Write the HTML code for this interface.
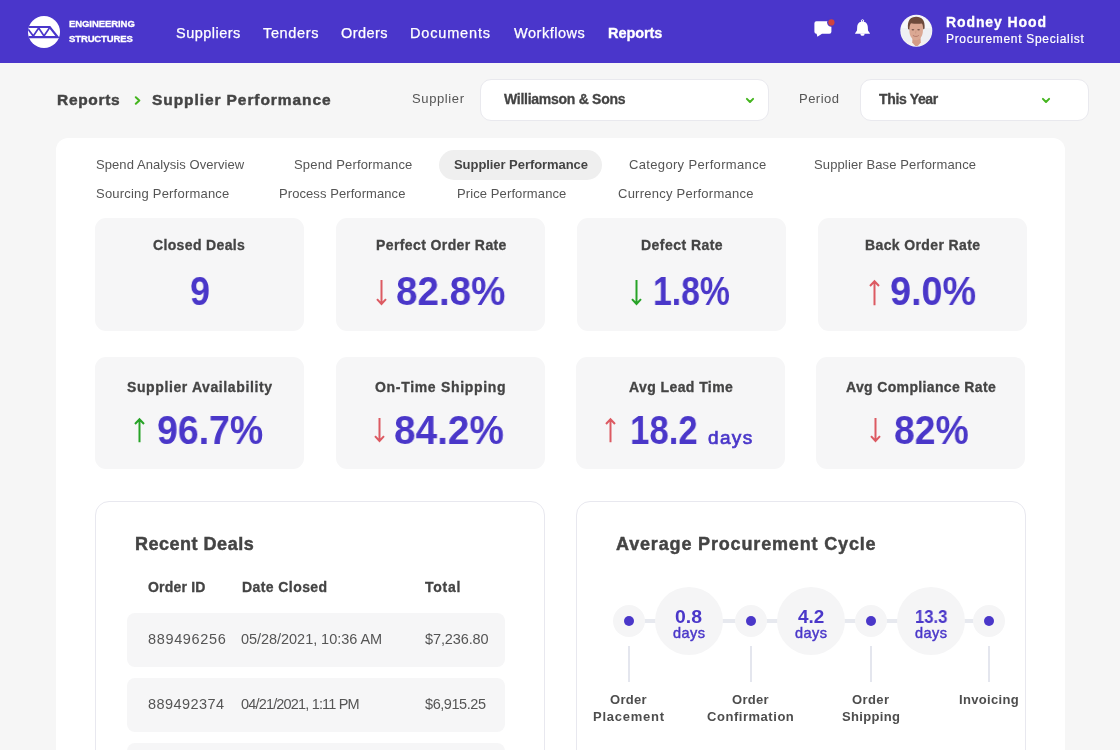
<!DOCTYPE html>
<html><head><meta charset="utf-8"><title>Supplier Performance</title><style>
*{margin:0;padding:0;box-sizing:border-box}
html,body{width:1120px;height:750px;overflow:hidden;background:#f6f6f6;font-family:"Liberation Sans",sans-serif}
.t{position:absolute;white-space:nowrap;-webkit-font-smoothing:antialiased;will-change:transform}
.hdr{position:absolute;left:0;top:0;width:1120px;height:63px;background:#4a36cb}
.sel{position:absolute;top:79px;height:42px;background:#fff;border:1px solid #e9e9ee;border-radius:11px}
.panel{position:absolute;left:56px;top:138px;width:1009px;height:700px;background:#fff;border-radius:12px}
.pill{position:absolute;left:439px;top:150px;width:163px;height:30px;border-radius:15px;background:#efefef}
.card{position:absolute;width:209px;background:#f6f6f7;border-radius:11px}
.box{position:absolute;top:501px;height:400px;background:#fff;border:1px solid #e8e8ef;border-radius:14px}
.row{position:absolute;left:127px;width:378px;height:54px;background:#f6f6f7;border-radius:8px}
.conn{position:absolute;height:4px;background:#e7e9ef}
.sc{position:absolute;width:32px;height:32px;border-radius:50%;background:#f5f5f6}
.bc{position:absolute;width:68px;height:68px;border-radius:50%;background:#f5f5f6}
.dot{position:absolute;width:10px;height:10px;border-radius:50%;background:#4a37c9}
.vl{position:absolute;top:645.5px;width:2px;height:36.5px;background:#e4e6ee}
.ar{position:absolute;overflow:visible}
.b{-webkit-text-stroke:0.3px currentColor}
.bb{-webkit-text-stroke:0.45px currentColor}
</style></head>
<body>
<div class="hdr"></div>
<svg style="position:absolute;left:28px;top:16px" width="32" height="32" viewBox="0 0 32 32">
<defs><clipPath id="cc"><circle cx="16" cy="16" r="16"/></clipPath></defs>
<circle cx="16" cy="16" r="16" fill="#fff"/>
<g clip-path="url(#cc)" stroke="#4a36cb" fill="none">
<path d="M-1 11 H21.7 L29.8 21.2 H-1" stroke-width="2.2" stroke-linejoin="miter"/>
<path d="M0 13 L5.3 20 L10.7 12 L16 20 L21.4 12" stroke-width="1.7"/>
</g></svg><svg style="position:absolute;left:813px;top:17px" width="24" height="22" viewBox="0 0 24 22">
<path d="M3.4 4.3 H16.4 A2 2 0 0 1 18.4 6.3 V14.7 A2 2 0 0 1 16.4 16.7 H9 L4.4 19.8 L3.6 16.7 H3.4 A2 2 0 0 1 1.4 14.7 V6.3 A2 2 0 0 1 3.4 4.3 Z" fill="#fff"/>
<circle cx="18.4" cy="5.4" r="4.3" fill="#4a36cb"/>
<circle cx="18.4" cy="5.4" r="3.1" fill="#d0433f"/></svg><svg style="position:absolute;left:854px;top:19px" width="17" height="18" viewBox="0 0 17 18">
<circle cx="8.5" cy="1.9" r="1.2" fill="none" stroke="#fff" stroke-width="1"/>
<path d="M8.5 2.6 C11.6 2.6 13.6 4.8 13.8 8 L14 11.6 L15.9 14.2 V14.8 H1.1 V14.2 L3 11.6 L3.2 8 C3.4 4.8 5.4 2.6 8.5 2.6 Z" fill="#fff"/>
<path d="M6.2 14.6 H10.8 L10.2 16.2 Q8.5 17.2 6.8 16.2 Z" fill="#fff"/></svg><svg style="position:absolute;left:900px;top:14px" width="33" height="34" viewBox="0 0 33 34">
<defs><clipPath id="av"><circle cx="16.3" cy="16.8" r="15.2"/></clipPath></defs>
<circle cx="16.3" cy="16.8" r="16" fill="#f4f4f6"/>
<g clip-path="url(#av)">
<rect width="33" height="34" fill="#eeeff2"/>
<rect x="0" y="0" width="33" height="14" fill="#f6f6f8"/>
<path d="M3 34 C4 29 8 27.3 12.5 26.8 L20.5 26.8 C25 27.3 28.5 29 29.5 34 Z" fill="#f4f2ef"/>
<path d="M12.6 23 L20.4 23 L20.8 28.6 L16.6 33.5 L12.2 28.6 Z" fill="#d49c86"/>
<path d="M9.3 11 C9.3 8 11.5 6.5 16.2 6.5 C21 6.5 23.1 8 23.1 11 L22.9 17 C22.7 22.3 19.8 26.2 16.1 26.2 C12.3 26.2 9.5 22.3 9.4 17 Z" fill="#dba893"/>
<path d="M8 15 C7.2 6 10.5 2.8 16.2 2.8 C21.8 2.8 25.2 6 24.6 14.5 L23.2 15.5 C23 11.5 22.6 10 21.6 9.5 C18.5 10.2 13.8 9.8 11 9.2 C10 10.3 9.6 12 9.4 15.8 Z" fill="#6d4a3b"/>
<ellipse cx="12.9" cy="15.8" rx="1.4" ry="0.75" fill="#7d5a4e"/><ellipse cx="18.6" cy="15.8" rx="1.4" ry="0.75" fill="#7d5a4e"/>
<path d="M16 16.5 L15.6 19.5" stroke="#c89480" stroke-width="0.8" fill="none"/>
<path d="M12.9 21.4 C14.6 22.8 17.2 22.8 18.8 21.4" stroke="#b57a6c" stroke-width="1" fill="none"/>
</g></svg>
<div class="sel" style="left:480px;width:289px"></div>
<div class="sel" style="left:860px;width:229px"></div>
<svg style="position:absolute;left:745px;top:97px" width="10" height="7" viewBox="0 0 10 7"><path d="M1.9 1.9 L5 5 L8.1 1.9" fill="none" stroke="#45b51f" stroke-width="2" stroke-linecap="round" stroke-linejoin="round"/></svg><svg style="position:absolute;left:1041px;top:97px" width="10" height="7" viewBox="0 0 10 7"><path d="M1.9 1.9 L5 5 L8.1 1.9" fill="none" stroke="#45b51f" stroke-width="2" stroke-linecap="round" stroke-linejoin="round"/></svg><svg style="position:absolute;left:134px;top:96.3px" width="8" height="9" viewBox="0 0 8 9"><path d="M1.8 1.2 L5.3 4.5 L1.8 7.8" fill="none" stroke="#45b51f" stroke-width="2" stroke-linecap="round" stroke-linejoin="round"/></svg>
<div class="panel"></div>
<div class="pill"></div>
<div class="card" style="left:95px;top:218px;height:113px"></div><div class="card" style="left:336px;top:218px;height:113px"></div><div class="card" style="left:577px;top:218px;height:113px"></div><div class="card" style="left:818px;top:218px;height:113px"></div><div class="card" style="left:95px;top:357px;height:112px"></div><div class="card" style="left:336px;top:357px;height:112px"></div><div class="card" style="left:576px;top:357px;height:112px"></div><div class="card" style="left:816px;top:357px;height:112px"></div>
<div class="box" style="left:95px;width:450px"></div>
<div class="box" style="left:576px;width:450px"></div>
<div class="row" style="top:613px"></div><div class="row" style="top:678px"></div><div class="row" style="top:743px"></div>
<div class="conn" style="left:628.6px;top:619px;width:360.6px"></div><div class="sc" style="left:612.6px;top:605px"></div><div class="dot" style="left:623.6px;top:616.3px"></div><div class="vl" style="left:627.6px"></div><div class="sc" style="left:734.6px;top:605px"></div><div class="dot" style="left:745.6px;top:616.3px"></div><div class="vl" style="left:749.6px"></div><div class="sc" style="left:854.9px;top:605px"></div><div class="dot" style="left:865.9px;top:616.3px"></div><div class="vl" style="left:869.9px"></div><div class="sc" style="left:973.2px;top:605px"></div><div class="dot" style="left:984.2px;top:616.3px"></div><div class="vl" style="left:988.2px"></div><div class="bc" style="left:654.8px;top:587px"></div><div class="bc" style="left:776.7px;top:587px"></div><div class="bc" style="left:897.0px;top:587px"></div>
<div class="t" style="left:69.30px;top:18.76px;font-size:9.5px;line-height:9.5px;font-weight:700;color:#fff;letter-spacing:-0.071px;-webkit-text-stroke:0.3px #fff">ENGINEERING</div>
<div class="t" style="left:69.30px;top:33.76px;font-size:9.5px;line-height:9.5px;font-weight:700;color:#fff;letter-spacing:-0.125px;-webkit-text-stroke:0.3px #fff">STRUCTURES</div>
<div class="t" style="left:175.60px;top:25.72px;font-size:14.5px;line-height:14.5px;font-weight:400;color:#fff;letter-spacing:0.481px;-webkit-text-stroke:0.25px #fff">Suppliers</div>
<div class="t" style="left:262.90px;top:25.72px;font-size:14.5px;line-height:14.5px;font-weight:400;color:#fff;letter-spacing:0.651px;-webkit-text-stroke:0.25px #fff">Tenders</div>
<div class="t" style="left:340.90px;top:25.72px;font-size:14.5px;line-height:14.5px;font-weight:400;color:#fff;letter-spacing:0.438px;-webkit-text-stroke:0.25px #fff">Orders</div>
<div class="t" style="left:410.40px;top:25.72px;font-size:14.5px;line-height:14.5px;font-weight:400;color:#fff;letter-spacing:0.832px;-webkit-text-stroke:0.25px #fff">Documents</div>
<div class="t" style="left:513.70px;top:25.72px;font-size:14.5px;line-height:14.5px;font-weight:400;color:#fff;letter-spacing:0.525px;-webkit-text-stroke:0.25px #fff">Workflows</div>
<div class="t b" style="left:607.80px;top:25.72px;font-size:14.5px;line-height:14.5px;font-weight:700;color:#fff;letter-spacing:-0.080px;">Reports</div>
<div class="t b" style="left:946.40px;top:15.25px;font-size:14px;line-height:14px;font-weight:700;color:#fff;letter-spacing:0.900px;">Rodney Hood</div>
<div class="t" style="left:946.20px;top:32.84px;font-size:12px;line-height:12px;font-weight:400;color:#fff;letter-spacing:0.686px;-webkit-text-stroke:0.2px #fff">Procurement Specialist</div>
<div class="t bb" style="left:57.25px;top:91.98px;font-size:15.5px;line-height:15.5px;font-weight:700;color:#444444;letter-spacing:0.690px;">Reports</div>
<div class="t bb" style="left:152.30px;top:91.98px;font-size:15.5px;line-height:15.5px;font-weight:700;color:#444444;letter-spacing:0.922px;">Supplier Performance</div>
<div class="t" style="left:411.60px;top:91.99px;font-size:13px;line-height:13px;font-weight:400;color:#555555;letter-spacing:0.615px;">Supplier</div>
<div class="t b" style="left:504.20px;top:92.15px;font-size:14px;line-height:14px;font-weight:700;color:#444444;letter-spacing:-0.274px;">Williamson &amp; Sons</div>
<div class="t" style="left:799.40px;top:92.29px;font-size:13px;line-height:13px;font-weight:400;color:#555555;letter-spacing:0.483px;">Period</div>
<div class="t b" style="left:879.40px;top:92.15px;font-size:14px;line-height:14px;font-weight:700;color:#444444;letter-spacing:-0.351px;">This Year</div>
<div class="t" style="left:96.25px;top:158.29px;font-size:13px;line-height:13px;font-weight:400;color:#555555;letter-spacing:0.070px;">Spend Analysis Overview</div>
<div class="t" style="left:293.60px;top:158.29px;font-size:13px;line-height:13px;font-weight:400;color:#555555;letter-spacing:0.167px;">Spend Performance</div>
<div class="t" style="left:453.90px;top:158.29px;font-size:13px;line-height:13px;font-weight:700;color:#444444;letter-spacing:-0.058px;">Supplier Performance</div>
<div class="t" style="left:629.10px;top:158.29px;font-size:13px;line-height:13px;font-weight:400;color:#555555;letter-spacing:0.338px;">Category Performance</div>
<div class="t" style="left:814.30px;top:158.29px;font-size:13px;line-height:13px;font-weight:400;color:#555555;letter-spacing:0.126px;">Supplier Base Performance</div>
<div class="t" style="left:96.25px;top:186.99px;font-size:13px;line-height:13px;font-weight:400;color:#555555;letter-spacing:0.206px;">Sourcing Performance</div>
<div class="t" style="left:278.60px;top:186.99px;font-size:13px;line-height:13px;font-weight:400;color:#555555;letter-spacing:0.078px;">Process Performance</div>
<div class="t" style="left:456.60px;top:186.99px;font-size:13px;line-height:13px;font-weight:400;color:#555555;letter-spacing:0.103px;">Price Performance</div>
<div class="t" style="left:618.00px;top:186.99px;font-size:13px;line-height:13px;font-weight:400;color:#555555;letter-spacing:0.244px;">Currency Performance</div>
<div class="t b" style="left:153.40px;top:238.15px;font-size:14px;line-height:14px;font-weight:700;color:#444444;letter-spacing:0.353px;">Closed Deals</div>
<div class="t" style="left:189.70px;top:271.33px;font-size:40px;line-height:40px;font-weight:700;color:#4a37c9;transform:scaleX(0.8948);transform-origin:0 0">9</div>
<div class="t b" style="left:375.60px;top:238.15px;font-size:14px;line-height:14px;font-weight:700;color:#444444;letter-spacing:0.393px;">Perfect Order Rate</div>
<div class="t" style="left:396.10px;top:271.33px;font-size:40px;line-height:40px;font-weight:700;color:#4a37c9;transform:scaleX(0.9656);transform-origin:0 0">82.8%</div>
<svg class="ar" style="left:376.2px;top:279.8px" width="11.0" height="25.2" viewBox="0 0 11.0 25.2"><path d="M5.5 0 V23.7 M1 19.2 L5.5 24.0 L10.0 19.2" fill="none" stroke="#dc5a62" stroke-width="2" stroke-linecap="butt" stroke-linejoin="miter"/></svg>
<div class="t b" style="left:640.80px;top:238.15px;font-size:14px;line-height:14px;font-weight:700;color:#444444;letter-spacing:0.457px;">Defect Rate</div>
<div class="t" style="left:653.20px;top:271.33px;font-size:40px;line-height:40px;font-weight:700;color:#4a37c9;transform:scaleX(0.8447);transform-origin:0 0">1.8%</div>
<svg class="ar" style="left:631.0px;top:279.8px" width="11.0" height="25.2" viewBox="0 0 11.0 25.2"><path d="M5.5 0 V23.7 M1 19.2 L5.5 24.0 L10.0 19.2" fill="none" stroke="#27a327" stroke-width="2" stroke-linecap="butt" stroke-linejoin="miter"/></svg>
<div class="t b" style="left:865.00px;top:238.15px;font-size:14px;line-height:14px;font-weight:700;color:#444444;letter-spacing:0.377px;">Back Order Rate</div>
<div class="t" style="left:890.10px;top:271.33px;font-size:40px;line-height:40px;font-weight:700;color:#4a37c9;transform:scaleX(0.9456);transform-origin:0 0">9.0%</div>
<svg class="ar" style="left:868.9px;top:279.8px" width="11.0" height="25.2" viewBox="0 0 11.0 25.2"><path d="M5.5 25.2 V1.5 M1 6.0 L5.5 1.2 L10.0 6.0" fill="none" stroke="#dc5a62" stroke-width="2" stroke-linecap="butt" stroke-linejoin="miter"/></svg>
<div class="t b" style="left:127.30px;top:380.35px;font-size:14px;line-height:14px;font-weight:700;color:#444444;letter-spacing:0.611px;">Supplier Availability</div>
<div class="t" style="left:157.20px;top:410.43px;font-size:40px;line-height:40px;font-weight:700;color:#4a37c9;transform:scaleX(0.9374);transform-origin:0 0">96.7%</div>
<svg class="ar" style="left:134.2px;top:417.8px" width="11.0" height="24.2" viewBox="0 0 11.0 24.2"><path d="M5.5 24.2 V1.5 M1 6.0 L5.5 1.2 L10.0 6.0" fill="none" stroke="#27a327" stroke-width="2" stroke-linecap="butt" stroke-linejoin="miter"/></svg>
<div class="t b" style="left:375.20px;top:380.35px;font-size:14px;line-height:14px;font-weight:700;color:#444444;letter-spacing:0.687px;">On-Time Shipping</div>
<div class="t" style="left:393.90px;top:410.43px;font-size:40px;line-height:40px;font-weight:700;color:#4a37c9;transform:scaleX(0.9700);transform-origin:0 0">84.2%</div>
<svg class="ar" style="left:374.2px;top:417.8px" width="11.0" height="24.2" viewBox="0 0 11.0 24.2"><path d="M5.5 0 V22.7 M1 18.2 L5.5 23.0 L10.0 18.2" fill="none" stroke="#dc5a62" stroke-width="2" stroke-linecap="butt" stroke-linejoin="miter"/></svg>
<div class="t b" style="left:628.90px;top:380.35px;font-size:14px;line-height:14px;font-weight:700;color:#444444;letter-spacing:0.416px;">Avg Lead Time</div>
<div class="t" style="left:629.90px;top:410.43px;font-size:40px;line-height:40px;font-weight:700;color:#4a37c9;transform:scaleX(0.8710);transform-origin:0 0">18.2</div>
<svg class="ar" style="left:605.0px;top:417.8px" width="11.0" height="24.2" viewBox="0 0 11.0 24.2"><path d="M5.5 24.2 V1.5 M1 6.0 L5.5 1.2 L10.0 6.0" fill="none" stroke="#dc5a62" stroke-width="2" stroke-linecap="butt" stroke-linejoin="miter"/></svg>
<div class="t b" style="left:846.00px;top:380.35px;font-size:14px;line-height:14px;font-weight:700;color:#444444;letter-spacing:0.350px;">Avg Compliance Rate</div>
<div class="t" style="left:893.50px;top:410.43px;font-size:40px;line-height:40px;font-weight:700;color:#4a37c9;transform:scaleX(0.9333);transform-origin:0 0">82%</div>
<svg class="ar" style="left:869.9px;top:417.8px" width="11.0" height="24.2" viewBox="0 0 11.0 24.2"><path d="M5.5 0 V22.7 M1 18.2 L5.5 23.0 L10.0 18.2" fill="none" stroke="#dc5a62" stroke-width="2" stroke-linecap="butt" stroke-linejoin="miter"/></svg>
<div class="t" style="left:708.10px;top:427.71px;font-size:19px;line-height:19px;font-weight:400;color:#4a37c9;letter-spacing:1.357px;-webkit-text-stroke:0.7px #4a37c9">days</div>
<div class="t bb" style="left:134.60px;top:535.06px;font-size:18px;line-height:18px;font-weight:700;color:#444444;letter-spacing:0.513px;">Recent Deals</div>
<div class="t b" style="left:148.30px;top:580.25px;font-size:14px;line-height:14px;font-weight:700;color:#444444;letter-spacing:0.198px;">Order ID</div>
<div class="t b" style="left:241.70px;top:580.25px;font-size:14px;line-height:14px;font-weight:700;color:#444444;letter-spacing:0.419px;">Date Closed</div>
<div class="t b" style="left:425.40px;top:580.25px;font-size:14px;line-height:14px;font-weight:700;color:#444444;letter-spacing:0.751px;">Total</div>
<div class="t" style="left:148.20px;top:631.72px;font-size:14.5px;line-height:14.5px;font-weight:400;color:#555555;letter-spacing:0.653px;">889496256</div>
<div class="t" style="left:241.40px;top:631.72px;font-size:14.5px;line-height:14.5px;font-weight:400;color:#555555;letter-spacing:-0.042px;">05/28/2021, 10:36 AM</div>
<div class="t" style="left:425.40px;top:631.72px;font-size:14.5px;line-height:14.5px;font-weight:400;color:#555555;letter-spacing:-0.114px;">$7,236.80</div>
<div class="t" style="left:148.20px;top:696.72px;font-size:14.5px;line-height:14.5px;font-weight:400;color:#555555;letter-spacing:0.441px;">889492374</div>
<div class="t" style="left:241.40px;top:696.72px;font-size:14.5px;line-height:14.5px;font-weight:400;color:#555555;letter-spacing:-0.830px;">04/21/2021, 1:11 PM</div>
<div class="t" style="left:425.40px;top:696.72px;font-size:14.5px;line-height:14.5px;font-weight:400;color:#555555;letter-spacing:-0.439px;">$6,915.25</div>
<div class="t bb" style="left:615.60px;top:535.06px;font-size:18px;line-height:18px;font-weight:700;color:#444444;letter-spacing:0.840px;">Average Procurement Cycle</div>
<div class="t" style="left:675.30px;top:607.56px;font-size:18px;line-height:18px;font-weight:700;color:#4a37c9;transform:scaleX(1.0791);transform-origin:0 0">0.8</div>
<div class="t" style="left:672.80px;top:626.22px;font-size:14.5px;line-height:14.5px;font-weight:400;color:#4a37c9;letter-spacing:0.459px;-webkit-text-stroke:0.45px #4a37c9">days</div>
<div class="t" style="left:797.55px;top:607.56px;font-size:18px;line-height:18px;font-weight:700;color:#4a37c9;transform:scaleX(1.0512);transform-origin:0 0">4.2</div>
<div class="t" style="left:794.70px;top:626.22px;font-size:14.5px;line-height:14.5px;font-weight:400;color:#4a37c9;letter-spacing:0.459px;-webkit-text-stroke:0.45px #4a37c9">days</div>
<div class="t" style="left:914.80px;top:607.56px;font-size:18px;line-height:18px;font-weight:700;color:#4a37c9;transform:scaleX(0.9250);transform-origin:0 0">13.3</div>
<div class="t" style="left:915.00px;top:626.22px;font-size:14.5px;line-height:14.5px;font-weight:400;color:#4a37c9;letter-spacing:0.459px;-webkit-text-stroke:0.45px #4a37c9">days</div>
<div class="t" style="left:610.30px;top:692.99px;font-size:13px;line-height:13px;font-weight:700;color:#4d4d4d;letter-spacing:0.300px;">Order</div>
<div class="t" style="left:593.10px;top:709.79px;font-size:13px;line-height:13px;font-weight:700;color:#4d4d4d;letter-spacing:0.747px;">Placement</div>
<div class="t" style="left:732.30px;top:692.99px;font-size:13px;line-height:13px;font-weight:700;color:#4d4d4d;letter-spacing:0.300px;">Order</div>
<div class="t" style="left:707.20px;top:709.79px;font-size:13px;line-height:13px;font-weight:700;color:#4d4d4d;letter-spacing:0.538px;">Confirmation</div>
<div class="t" style="left:852.40px;top:692.99px;font-size:13px;line-height:13px;font-weight:700;color:#4d4d4d;letter-spacing:0.400px;">Order</div>
<div class="t" style="left:841.90px;top:709.79px;font-size:13px;line-height:13px;font-weight:700;color:#4d4d4d;letter-spacing:0.343px;">Shipping</div>
<div class="t" style="left:958.60px;top:692.99px;font-size:13px;line-height:13px;font-weight:700;color:#4d4d4d;letter-spacing:0.343px;">Invoicing</div>
</body></html>
